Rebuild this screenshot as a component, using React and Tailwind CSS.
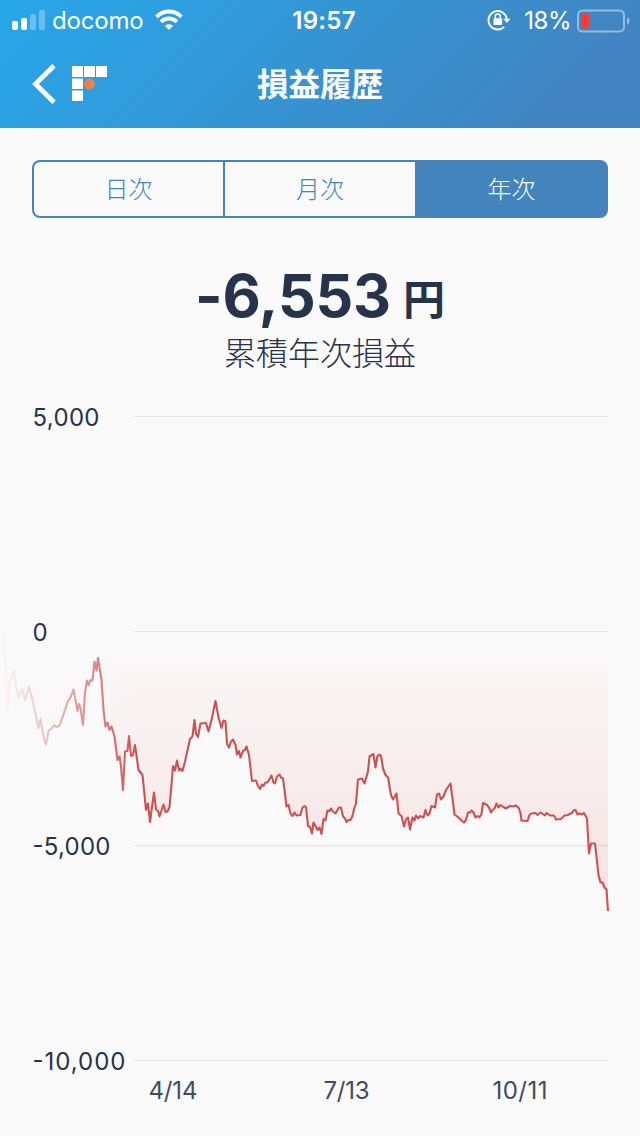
import React, { useState } from 'react';

const TABS = ['日次', '月次', '年次'];

const GRID = [
  { label: '5,000', y: 416.5, width: 67 },
  { label: '0', y: 631.5, width: 15 },
  { label: '-5,000', y: 845.5, width: 78 },
  { label: '-10,000', y: 1060.5, width: 93 },
];

const DATES = [
  { label: '4/14', x: 173, width: 49 },
  { label: '7/13', x: 346.5, width: 46 },
  { label: '10/11', x: 520, width: 55 },
];

const LINE = [
  '4,633 7.5,710 9.5,682 11.5,679 13.5,670 16,687 18.5,698 22,689 25,700 29,687 32,698 38.5,728 40.5,719 43.5,737 46,744.5',
  '48.5,731 52,728 54,725 56,727 59.5,726 64,713 68,701 70.5,697.5 73.5,689.5 75.5,700 77.5,711 79,704 80.5,708 83,725',
  '85,693 87,680.5 88.5,685 90.5,680 92.5,680.5 94.5,661.5 96.5,670.5 98,658 101.5,680 103.5,710 105.5,726.5 107.5,722.5',
  '109.5,730 111.5,726.5 114.5,736.5 117.5,760 119.5,756.5 121,766.5 123,790 125,751.5 127.5,751 129,736 131,756 133,755',
  '135,745 138.5,770 142.5,775 146,810 148,803.5 150,822 154,792.5 156,809.5 158,811 159.5,816.5 163.5,804.5 165.5,812',
  '167.5,811.5 169.5,807 171.5,785 173,766 175,770.5 177,760.5 179,770.5 180.5,768.5 182.5,771 185,761.5 190,739',
  '192.5,736.5 194.5,720 196,734 198,737 200.5,723.5 206,723 208.5,731.5 211.5,720 215.5,701 218.5,717.5 221.5,728',
  '223.5,720.5 225.5,721.5 227,744 229,747.5 230.5,742.5 233,739.5 235.5,745 237,754.5 239,751 240.5,757.5 243,751',
  '245,750 246.5,746.5 249,755 252,781 256,780.5 257.5,785 260,789 262,784.5 263.5,786 265.5,782.5 267.5,782.5',
  '271.5,775.5 273.5,782.5 275,783.5 277,776.5 279.5,774.5 281,777.5 283,778.5 284.5,790 286.5,806.5 288.5,805',
  '290.5,813.5 292.5,816 294.5,812.5 296.5,815.5 300.5,815 302.5,807.5 304.5,806 306,807.5 308,826 310,827 312,833.5',
  '313.5,822.5 315.5,826 317.5,830 319.5,827.5 321.5,834 323.5,819 325.5,820.5 327.5,810.5 329.5,811 331,808.5',
  '333,811.5 335.5,813.5 339,807.5 341,807.5 343,816.5 345,818.5 346.5,822 348.5,820 350.5,820 352.5,816 354.5,807.5',
  '356,803.5 358,779.5 362,778.5 364.5,783.5 368,771.5 369.5,756.5 373.5,754 375.5,767.5 377.5,756 379.5,754.5',
  '381,756 383,768.5 385.5,775 388,777.5 391,795 393,799.5 396.5,793.5 398.5,813.5 401.5,816 404,826.5 406,819.5',
  '408,817.5 410,829.5 412.5,817.5 414.5,820.5 416,815.5 418,818.5 420,816 423.5,817.5 425.5,810 427.5,815.5',
  '429.5,813.5 431.5,806 435,807.5 437,794.5 439,793.5 441,799.5 443.5,796.5 446,790 450.5,783.5 452.5,798.5',
  '454.5,814.5 456.5,816 458.5,817.5 462,821 464,822.5 466,820 468,812.5 470,812.5 471.5,810.5 473.5,812.5',
  '475.5,817.5 477.5,816 479.5,817.5 481.5,814 483,803 487,805 489,807.5 491,812.5 493,809.5 494.5,808.5 496.5,803.5',
  '498.5,807.5 500.5,805 502.5,806.5 506,808.5 510,806 513.5,806.5 516,805.5 519,808.5 520.5,813.5 521.5,820.5',
  '527.5,821 529.5,815 531.5,813.5 535.5,813 537.5,815 540.5,812.5 545,815.5 546.5,813 550,815.5 554,815.5',
  '556,819.5 561,819 564.5,815.5 568,815 572.5,812.5 574,810 575.5,810 577.5,814.5 579.5,813.5 581.5,814.5 584,813',
  '587,818.5 589,853.5 591,843.5 595,843.5 598.5,875 600.5,882.5 602.5,882.5 604.5,887.5 606.5,889.5 608,911',
].join(' ');

function StatusBar() {
  return (
    <div className="grid h-[42px] grid-cols-3 items-center px-3">
      <div className="flex items-center">
        <svg className="-mt-[2px] shrink-0" width="34" height="22" viewBox="0 0 34 22" fill="#fff">
          <rect x="0" y="12" width="6" height="9" rx="2" />
          <rect x="9" y="9" width="6" height="12" rx="2" />
          <rect x="18" y="5" width="6" height="16" rx="2" opacity="0.3" />
          <rect x="27" y="1" width="6" height="20" rx="2" opacity="0.3" />
        </svg>
        <span className="ml-[6px] text-[24px] leading-none tracking-[-0.2px]">docomo</span>
        <svg className="-mt-[2px] ml-3 shrink-0" width="28" height="22" viewBox="0 0 28 22" fill="none" stroke="#fff" strokeWidth="3.8">
          <path d="M1.5 7.8C8.5 .7 19.5 .7 26.5 7.8" />
          <path d="M6 12.8C10.6 8.4 17.4 8.4 22 12.8" />
          <path d="M14 21L9.8 16.8C12 14.6 16 14.6 18.2 16.8Z" fill="#fff" stroke="none" />
        </svg>
      </div>
      <span className="pl-2 text-center text-[24px] font-semibold leading-none tracking-[0.3px]">19:57</span>
      <div className="flex items-center justify-end">
        <svg className="-mt-[2px] shrink-0" width="24" height="22" viewBox="0 0 24 22" fill="none" stroke="#fff" strokeWidth="1.9">
          <path d="M19.8 10A9.2 9.2 0 1 0 17.2 17.8" />
          <path d="M16.4 9.8H23.4L19.9 14Z" fill="#fff" stroke="none" />
          <rect x="6.5" y="9.2" width="8.6" height="6.8" rx="1" fill="#fff" stroke="none" />
          <path d="M8.3 10V7.5A2.5 2.5 0 0 1 13.3 7.5V10" strokeWidth="1.5" />
        </svg>
        <span className="ml-[13px] text-[24px] leading-none tracking-[-0.5px]">18%</span>
        <svg className="-mr-[3px] ml-[6px] shrink-0" width="54" height="24" viewBox="0 0 54 24" fill="none">
          <rect x="1" y="1.5" width="46" height="21" rx="4.5" stroke="#fff" strokeOpacity="0.45" strokeWidth="2" />
          <rect x="4" y="4.5" width="8" height="15" rx="1.5" fill="#ff3b30" />
          <path d="M50 8.5C53.5 9.5 53.5 14.5 50 15.5Z" fill="#fff" fillOpacity="0.45" />
        </svg>
      </div>
    </div>
  );
}

function NavBar() {
  return (
    <div className="grid h-[86px] grid-cols-3 items-center px-8">
      <div className="-mt-[2px] flex items-center gap-4">
        <svg width="24" height="40" viewBox="0 0 24 40" fill="none" stroke="#fff" strokeWidth="4.8">
          <path d="M22 1.8L3.5 20L22 38.2" />
        </svg>
        <svg width="36" height="36" viewBox="0 0 36 36" fill="#fff">
          <rect x="0" y="0" width="11" height="11" />
          <rect x="12" y="0" width="11" height="11" />
          <rect x="24" y="0" width="11" height="11" />
          <rect x="0" y="12.5" width="11" height="10.5" />
          <rect x="0" y="24.5" width="11" height="10.5" />
          <circle cx="17.5" cy="18" r="5.5" fill="#ea8050" />
        </svg>
      </div>
      <h1 className="text-center text-[31.5px] font-bold leading-none">損益履歴</h1>
    </div>
  );
}

function Chart() {
  return (
    <svg className="block" width="640" height="746" viewBox="0 390 640 746">
      <defs>
        <linearGradient id="area" gradientUnits="userSpaceOnUse" x1="0" y1="632" x2="0" y2="911">
          <stop offset="0" stopColor="#e05050" stopOpacity="0" />
          <stop offset="1" stopColor="#e05050" stopOpacity="0.15" />
        </linearGradient>
        <linearGradient id="fade" x1="0" y1="0" x2="1" y2="0">
          <stop offset="0" stopColor="#fafafa" />
          <stop offset="1" stopColor="#fafafa" stopOpacity="0" />
        </linearGradient>
      </defs>
      {GRID.map((row) => (
        <line key={row.label} x1="134" x2="608" y1={row.y} y2={row.y} stroke="#e1e4e6" />
      ))}
      <polygon points={`4,632 ${LINE} 608,632`} fill="url(#area)" />
      <polyline points={LINE} fill="none" stroke="#cb5252" strokeWidth="2.1" strokeLinejoin="round" />
      <rect x="0" y="620" width="140" height="300" fill="url(#fade)" />
      <g fill="#27334b" fontSize="24">
        {GRID.map((row) => (
          <text key={row.label} x="32.5" y={row.y + 9} textLength={row.width}>{row.label}</text>
        ))}
        {DATES.map((date) => (
          <text key={date.label} x={date.x} y="1099" textAnchor="middle" textLength={date.width} fill="#414b60">
            {date.label}
          </text>
        ))}
      </g>
    </svg>
  );
}

function App() {
  const [tab, setTab] = useState('年次');

  return (
    <div className="flex h-[1136px] w-[640px] flex-col overflow-hidden bg-[#fafafa] font-['Inter','Noto_Sans_CJK_JP',sans-serif] text-[#27334b]">
      <header className="h-32 shrink-0 bg-[linear-gradient(135deg,#27a7e9_0%,#4283bf_90%)] text-white">
        <StatusBar />
        <NavBar />
      </header>
      <main className="flex flex-col">
        <div className="mx-8 mt-8 grid h-[58px] grid-cols-[191px_192px_1fr] divide-x-2 divide-[#4384bd] overflow-hidden rounded-lg bg-[#4384bd] p-[2px]">
          {TABS.map((name) => (
            <button
              key={name}
              onClick={() => setTab(name)}
              className={`pt-[2px] text-2xl font-light leading-none first:rounded-l-md last:rounded-r-md ${tab === name ? 'bg-[#4384bd] text-white' : 'bg-[#fafafa] text-[#4384bd]'}`}
            >
              {name}
            </button>
          ))}
        </div>
        <div className="flex h-[172px] flex-col items-center pt-[45px]">
          <p className="flex items-baseline gap-3 font-bold leading-none">
            <span className="text-[59px] leading-[66px] tracking-[-0.2px]">-6,553</span>
            <span className="relative -top-[2px] text-[42px] leading-none">円</span>
          </p>
          <p className="mt-[9px] text-[32px] font-light leading-[32px]">累積年次損益</p>
        </div>
        <Chart />
      </main>
    </div>
  );
}

export default App;
